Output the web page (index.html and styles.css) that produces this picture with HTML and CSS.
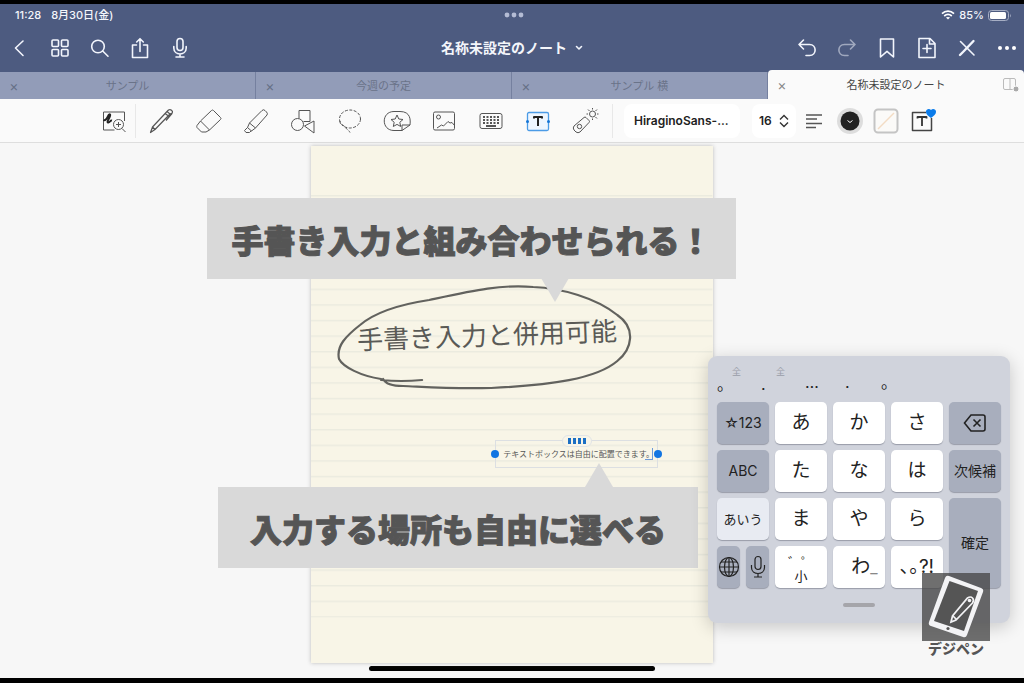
FILE: index.html
```html
<!DOCTYPE html>
<html lang="ja">
<head>
<meta charset="utf-8">
<meta name="viewport" content="width=device-width, initial-scale=1">
<title>名称未設定のノート</title>
<link rel="stylesheet" href="styles.css">
</head>
<body>
<header class="header">
  <div class="status">
    <div class="status-left"><span>11:28</span><span>8月30日(金)</span></div>
    <svg class="dots" width="20" height="6" viewBox="0 0 20 6"><circle cx="3" cy="3" r="2.4"/><circle cx="10" cy="3" r="2.4"/><circle cx="17" cy="3" r="2.4"/></svg>
    <div class="status-right">
      <svg width="14" height="10" viewBox="0 0 14 10" fill="none" stroke="#fff" stroke-width="1.7"><path d="M1 3.6C4.5.3 9.500.3 13 3.600M3.200 6C5.500 4 8.500 4 10.800 6"/><path d="M7 9.600 4.900 7.600Q7 6.200 9.100 7.600Z" fill="#fff" stroke="none"/></svg>
      <span>85%</span>
      <svg width="24" height="11" viewBox="0 0 24 11"><rect x=".5" y=".5" width="20" height="10" rx="3" fill="none" stroke="#a6aec4"/><rect x="2" y="2" width="16" height="7" rx="1.500" fill="#fff"/><path d="M22 3.500q1.500 2 0 4z" fill="#a6aec4"/></svg>
    </div>
  </div>
  <nav class="nav">
    <div class="nav-group">
      <button class="nav-btn" aria-label="戻る"><svg width="24" height="24" viewBox="0 0 24 24"><path d="M15 5 7.500 12 15 19.500"/></svg></button>
      <button class="nav-btn" aria-label="一覧"><svg width="24" height="24" viewBox="0 0 24 24"><rect x="4" y="4" width="6.500" height="6.500" rx="1"/><rect x="13.500" y="4" width="6.500" height="6.500" rx="1"/><rect x="4" y="13.500" width="6.500" height="6.500" rx="1"/><rect x="13.500" y="13.500" width="6.500" height="6.500" rx="1"/></svg></button>
      <button class="nav-btn" aria-label="検索"><svg width="24" height="24" viewBox="0 0 24 24"><circle cx="10" cy="10.500" r="6.300"/><path d="m14.700 15 5.300 5.200"/></svg></button>
      <button class="nav-btn" aria-label="共有"><svg width="24" height="24" viewBox="0 0 24 24"><path d="M8.500 9H4.500v12.500h15V9h-4M12 15.500V3M8.700 6 12 2.700 15.300 6"/></svg></button>
      <button class="nav-btn" aria-label="録音"><svg width="24" height="24" viewBox="0 0 24 24"><rect x="9" y="2.500" width="6" height="12" rx="3"/><path d="M5.800 10.500v1.500c0 8 12.400 8 12.400 0v-1.500M12 18v2.800M8 21h8"/></svg></button>
    </div>
    <button class="title">名称未設定のノート<svg width="8" height="8" viewBox="0 0 8 8"><path d="M1.500 2.500 4 5 6.500 2.500"/></svg></button>
    <div class="nav-group nav-end">
      <button class="nav-btn" aria-label="元に戻す"><svg width="24" height="24" viewBox="0 0 24 24"><path d="M8.500 4 4 8.500 8.500 13M4 8.500h10.500c7.500 0 7.500 11 0 11H11"/></svg></button>
      <button class="nav-btn dim" aria-label="やり直す"><svg width="24" height="24" viewBox="0 0 24 24"><path d="M15.500 4 20 8.500 15.500 13M20 8.500H9.500c-7.500 0-7.500 11 0 11H13"/></svg></button>
      <button class="nav-btn" aria-label="しおり"><svg width="24" height="24" viewBox="0 0 24 24"><path d="M5.500 3h13v18L12 15.300 5.500 21z"/></svg></button>
      <button class="nav-btn" aria-label="ページ追加"><svg width="24" height="24" viewBox="0 0 24 24"><path d="M4 2.500h11l5 5v14H4zM14.500 2.500V8H20M12 8.500v8M8 12.500h8"/></svg></button>
      <button class="nav-btn" aria-label="ペン切替"><svg width="24" height="24" viewBox="0 0 24 24"><path d="m5.500 5.500 13.500 13.500"/><path d="m18.500 5-10 10.500M8 16l-3 3" stroke-width="2.400"/></svg></button>
      <button class="nav-btn" aria-label="その他"><svg width="24" height="24" viewBox="0 0 24 24"><g fill="#fff" stroke="none"><circle cx="5" cy="12" r="2"/><circle cx="12" cy="12" r="2"/><circle cx="19" cy="12" r="2"/></g></svg></button>
    </div>
  </nav>
  <div class="tabs">
    <div class="tab"><button class="close" aria-label="閉じる">×</button><span>サンプル</span></div>
    <div class="tab"><button class="close" aria-label="閉じる">×</button><span>今週の予定</span></div>
    <div class="tab"><button class="close" aria-label="閉じる">×</button><span>サンプル 横</span></div>
    <div class="tab active"><button class="close" aria-label="閉じる">×</button><span>名称未設定のノート</span>
      <button class="split" aria-label="分割"><svg width="18" height="16" viewBox="0 0 18 16" fill="none" stroke="#bbb"><rect x="1.500" y="1.500" width="12" height="11" rx="1.500"/><path d="M8 1.500v11"/><circle cx="14" cy="12" r="3" fill="#aaa" stroke="#fafafa"/></svg></button>
    </div>
  </div>
</header>

<div class="toolbar">
  <div class="tools">
    <button class="tool first" aria-label="ズーム"><svg width="28" height="28" viewBox="0 0 28 28"><path d="M24.500 14V5h-21v18h11"/><path d="M3.500 13c3 2 5-7 6.500-5.500S6 15 8 15.500s2-2.500 4-2" stroke-width="2" stroke="#222"/><circle cx="18.500" cy="17.500" r="5"/><path d="m22 21.500 3.500 3.500M18.500 15v5M16 17.500h5"/></svg></button>
    <button class="tool" aria-label="ペン"><svg width="28" height="28" viewBox="0 0 28 28" stroke-width="1.200"><path d="M2.500 25.500 4.500 20 19 4.500 22 7 7 22.500zM4.500 20 7 22.500M17 6.500 20.500 9M19 4.500l1.500-1.500q1.500-1 3 .2t.8 2.800L22 7M24 6.500l-6 7"/></svg></button>
    <button class="tool" aria-label="消しゴム"><svg width="28" height="28" viewBox="0 0 28 28"><path d="M16.500 3.500q1-1 2 0l7 7q1 1 0 2L14.500 23 5.500 14zM5.500 14 2 18.500q-.5 1 0 2l4.500 4.500h4.500l3.500-2"/></svg></button>
    <button class="tool" aria-label="蛍光ペン"><svg width="28" height="28" viewBox="0 0 28 28"><path d="M20 3.500q1.500-1.500 3 0l1.500 1.500q1.500 1.500.5 3L13.500 21 7.500 16zM7.500 16 5.500 20.500 9.500 24 13.500 21M5.500 20.500 2.500 23.500l1.500 2h3.500l2-2"/></svg></button>
    <button class="tool" aria-label="図形"><svg width="28" height="28" viewBox="0 0 28 28"><path d="M10 11.500v-8h11v11h-6.500"/><circle cx="8.500" cy="17.500" r="6"/><path d="m15.500 19 9.500-5v12z"/></svg></button>
    <button class="tool" aria-label="なげなわ"><svg width="28" height="28" viewBox="0 0 28 28" stroke-dasharray="3 1.500"><ellipse cx="14" cy="12" rx="10.500" ry="9"/><path d="M4 14c0 5 3 3 5 6s3 2 5 5.500"/></svg></button>
    <button class="tool" aria-label="ステッカー"><svg width="28" height="28" viewBox="0 0 28 28"><path d="M19 23.500H11C-2 23.500-2 4.500 11 4.500h6c11 0 10.500 9 10 13.500zM19 23.500V18h8"/><path d="m14 8 1.800 4 4.200.5-3.200 2.800.9 4.200L14 17.400l-3.700 2.100.9-4.200L8 12.500l4.200-.5z"/></svg></button>
    <button class="tool" aria-label="画像"><svg width="28" height="28" viewBox="0 0 28 28"><rect x="3.500" y="5" width="21" height="18" rx="1.500"/><circle cx="8.500" cy="10" r="2"/><path d="m7 21 4.500-3 2 1 4.500-4.500 2 1.500 2-.5 2.500 3"/></svg></button>
    <button class="tool" aria-label="キーボード"><svg width="28" height="28" viewBox="0 0 28 28"><rect x="3" y="6.500" width="22" height="15" rx="2"/><path d="M6 10h16M6 13h16M6 16h16" stroke-width="2" stroke-dasharray="2 1.500"/><path d="M9 19h10" stroke-width="2"/></svg></button>
    <button class="tool" aria-label="テキスト"><svg width="28" height="28" viewBox="0 0 28 28"><rect x="3.500" y="5.500" width="21" height="18" rx="1.500" fill="#eef6ff" stroke="#4b9be6" stroke-width="1.300"/><path d="M10 11.500V10h8v1.500M14 10v9" stroke="#222" stroke-width="2"/><g fill="#1676d6" stroke="none"><circle cx="3.500" cy="14.500" r="1.500"/><circle cx="24.500" cy="14.500" r="1.500"/></g></svg></button>
    <button class="tool last" aria-label="レーザー"><svg width="28" height="28" viewBox="0 0 28 28"><path d="M13 10.500q1-1 2 0l3 3q1 1 0 2L9 25q-2 1.500-4 0l-2-2q-1.500-2 0-4z"/><circle cx="8.500" cy="19.500" r="2.200"/><circle cx="21.500" cy="7" r="3"/><path d="M21.500 1v1.500M21.500 11.500V13M15.500 7H17M26 7h1.500M17 2.500l1.500 1.500M26 2.500 24.500 4M24.500 10l1.500 1.500"/></svg></button>
  </div>
  <select class="font-select" aria-label="フォント"><option>HiraginoSans-...</option></select>
  <div class="size-box">
    <select class="size-select" aria-label="文字サイズ"><option>16</option></select>
    <svg width="10" height="14" viewBox="0 0 10 14" fill="none" stroke="#333" stroke-width="1.400"><path d="M1 5.500 5 1.500l4 4M1 8.500l4 4 4-4"/></svg>
  </div>
  <div class="format">
    <button class="fmt" aria-label="揃え"><svg width="28" height="28" viewBox="0 0 28 28" stroke-width="1.500"><path d="M6 8h16M6 12h11M6 16.500h16M6 20.500h10"/></svg></button>
    <button class="fmt" aria-label="文字色"><svg width="28" height="28" viewBox="0 0 28 28"><circle cx="14" cy="14" r="13" fill="#ddd" stroke="none"/><circle cx="14" cy="14" r="9.500" fill="#222" stroke="none"/><path d="m11.500 13.500 2.500 2 2.500-2" stroke="#fff"/></svg></button>
    <button class="fmt" aria-label="背景色"><svg width="28" height="28" viewBox="0 0 28 28"><rect x="2.500" y="2.500" width="23" height="23" rx="3.500" fill="#fbfaf8" stroke="#c4c4c4" stroke-width="2"/><path d="M6 22 22 6" stroke="#f3dcc4" stroke-width="1.500"/></svg></button>
    <button class="fmt" aria-label="既定スタイル"><svg width="28" height="28" viewBox="0 0 28 28"><path d="M23.500 11v12.500h-19v-18H18" stroke="#444" stroke-width="1.500"/><path d="M9.500 11.500V10h9v1.500M14 10v9" stroke="#333" stroke-width="1.800"/><path d="M23 11c-4-3-5-4-5-6.500s3.500-3.500 5-1.500c1.500-2 5-1 5 1.500S27 8 23 11z" fill="#0a7bea" stroke="none"/></svg></button>
  </div>
</div>

<main class="canvas">
  <article class="page">
    <svg class="ink" viewBox="0 0 401 517" preserveAspectRatio="none">
      <defs><pattern id="rule" width="401" height="15.600" patternUnits="userSpaceOnUse" y="49"><path d="M0 .7h401" stroke="#ebebdf" stroke-width="1.400"/></pattern></defs>
      <rect y="49" width="401" height="422.500" fill="url(#rule)"/>
      <path d="M70 233C50 230 32 221 28 213C25 200 35 190 49 179C62 168 85 159 118 154C160 145 190 138 222 141C250 142 285 152 306 169C325 182 321 203 306 215C285 233 240 239 180 242C140 243 115 241 92 240C80 240 74 237 72 233M70 234Q90 236 111 234" fill="none" stroke="#62625e" stroke-width="2.200" stroke-linecap="round"/>
    </svg>
    <p class="handwriting">手書き入力と併用可能</p>
    <div class="textbox">
      <span class="grip"><i></i><i></i><i></i><i></i></span>
      <input class="textbox-input" aria-label="テキストボックス" value="テキストボックスは自由に配置できます。">
      <span class="handle left"></span><span class="handle right"></span><span class="caret"></span>
    </div>
  </article>

  <div class="callout top">手書き入力と組み合わせられる！</div>
  <div class="callout bottom">入力する場所も自由に選べる</div>

  <section class="keyboard" aria-label="キーボード">
    <div class="candidates">
      <button class="cand wide"><small>全</small><span>。</span></button>
      <button class="cand wide"><small>全</small><span>.</span></button>
      <button class="cand"><span>…</span></button>
      <button class="cand"><span>.</span></button>
      <button class="cand"><span>。</span></button>
    </div>
    <div class="keys">
      <button class="key fn">☆123</button><button class="key">あ</button><button class="key">か</button><button class="key">さ</button>
      <button class="key fn" aria-label="削除"><svg width="24" height="20" viewBox="0 0 24 20"><path d="M8 2h12q2 0 2 2v12q0 2-2 2H8l-6.500-8zM10.500 6.500l7 7M17.500 6.500l-7 7" fill="none" stroke="#222" stroke-width="1.600"/></svg></button>
      <button class="key fn">ABC</button><button class="key">た</button><button class="key">な</button><button class="key">は</button><button class="key fn">次候補</button>
      <button class="key light">あいう</button><button class="key">ま</button><button class="key">や</button><button class="key">ら</button><button class="key fn enter">確定</button>
      <div class="pair">
        <button class="key fn" aria-label="言語"><svg width="22" height="22" viewBox="0 0 22 22" fill="none" stroke="#222" stroke-width="1.200"><circle cx="11" cy="11" r="9.500"/><ellipse cx="11" cy="11" rx="4.500" ry="9.500"/><path d="M11 1.500v19M1.500 11h19M3 6h16M3 16h16"/></svg></button>
        <button class="key fn" aria-label="音声入力"><svg width="18" height="24" viewBox="0 0 18 24" fill="none" stroke="#222" stroke-width="1.200"><rect x="6" y="1.500" width="6" height="13" rx="3"/><path d="M2.500 10v2.500c0 8 13 8 13 0V10M9 18.500V22M5 22h8"/></svg></button>
      </div>
      <button class="key marks"><span>゛゜</span><span>小</span></button><button class="key wa">わ<span>_</span></button><button class="key punct">､｡?!</button>
    </div>
    <div class="kb-grip"></div>
  </section>

  <div class="brand">
    <div class="brand-mark"><svg width="68" height="68" viewBox="0 0 68 68"><path d="M27 3Q24 2 23 5L7 49q-1 3 2 4l32 11q3 1 4-2L61 19q1-3-2-4z" fill="#f3f3f5"/><path d="m27.500 8 28.500 10L42 58 12 48z" fill="#555"/><circle cx="26" cy="55.500" r="1.600" fill="#555"/><path d="M29 49 30.500 43 45.500 25q3-2 5 0t0 5L34 47zM31 43l3 3" fill="none" stroke="#f3f3f5" stroke-width="1.700"/><circle cx="47.500" cy="27.500" r="1.800" fill="#f3f3f5"/></svg></div>
    <span>デジペン</span>
  </div>
  <div class="home-bar"></div>
</main>
</body>
</html>
```

FILE: styles.css
```css
* { box-sizing: border-box; }

body {
  margin: 0;
  min-height: 100vh;
  display: flex;
  flex-direction: column;
  overflow: hidden;
  border-top: 4px solid #000;
  border-bottom: 5px solid #000;
  background: #f7f7f7;
  color: #222;
  font-family: Inter, "Noto Sans CJK JP", sans-serif;
}

button, select, input { font-family: inherit; color: inherit; }
button { border: 0; padding: 0; background: none; }
svg { display: block; flex: none; }

.header { background: #4d5b80; color: #f4f6fb; }

.status {
  display: grid;
  grid-template-columns: 1fr auto 1fr;
  align-items: center;
  height: 22px;
  padding: 0 12px 0 15px;
  font-size: 11px;
  line-height: 14px;
  font-weight: 500;
}
.status-left { display: flex; gap: 10px; }
.status-right { display: flex; gap: 4px; align-items: center; justify-content: flex-end; }
.dots { fill: #b4bcd4; }

.nav {
  display: grid;
  grid-template-columns: 1fr auto 1fr;
  align-items: center;
  height: 44px;
}
.nav-group { display: flex; }
.nav-end { justify-content: flex-end; margin-right: -3px; }
.nav-btn { width: 40px; height: 40px; display: grid; place-items: center; }
.nav-btn svg, .title svg { fill: none; stroke: #f2f5fc; stroke-width: 1.6; stroke-linejoin: round; stroke-linecap: round; }
.dim { opacity: .5; }
.title { display: flex; align-items: center; gap: 8px; font-size: 14px; line-height: 20px; font-weight: 700; }

.tabs { display: grid; grid-template-columns: repeat(4, 1fr); align-items: end; }
.tab {
  position: relative;
  display: grid;
  place-items: center;
  height: 27px;
  background: #929cb8;
  color: #6a7389;
  border-right: 1px solid #75809f;
  font-size: 11px;
  line-height: 16px;
}
.tab.active { height: 29px; background: #fafafa; color: #444; border: 0; border-radius: 4px 4px 0 0; }
.close { position: absolute; left: 8px; font-size: 14px; line-height: 16px; width: 12px; color: #667086; }
.active .close { color: #888; }
.split { position: absolute; right: 4px; }

.toolbar {
  display: flex;
  align-items: center;
  height: 44px;
  padding-left: 92px;
  background: #fafafa;
  border-bottom: 1px solid #dedede;
}
.tools { display: flex; align-items: center; border-right: 1px solid #e8e8e8; padding-right: 4px; }
.tool { width: 47px; height: 34px; display: grid; place-items: center; }
.tool svg, .fmt svg { fill: none; stroke: #555; overflow: visible; stroke-linejoin: round; }
.first { border-right: 1px solid #e8e8e8; width: 44px; margin-right: 2px; }
.font-select, .size-select { appearance: none; border: 0; background: #fff; font-size: 12px; font-weight: 600; }
.font-select { width: 116px; height: 34px; margin-left: 11px; padding: 0 10px; border-radius: 8px; }
.size-box { display: flex; align-items: center; gap: 3px; height: 34px; margin-left: 12px; padding: 0 7px; background: #fff; border-radius: 8px; }
.size-select { width: 17px; padding: 0; }
.format { display: flex; }
.fmt { width: 36px; height: 34px; display: grid; place-items: center; }

.canvas { position: relative; flex: 1; display: flex; flex-direction: column; padding-top: 3px; }
.page {
  position: relative;
  flex: 1;
  width: 39.2%;
  margin: 0 auto;
  background: #f8f5e7;
  box-shadow: 0 0 4px #bbb;
}
.ink { position: absolute; width: 100%; height: 100%; }
.handwriting {
  position: absolute;
  left: 46px;
  top: 172px;
  margin: 0;
  color: #5a5a56;
  font-size: 26px;
  line-height: 36px;
  font-weight: 400;
  white-space: nowrap;
  transform: rotate(-2deg);
}
.textbox { position: absolute; left: 184px; top: 294px; width: 163px; height: 28px; border: 1px solid #dcdfe2; }
.textbox-input { display: block; width: 100%; height: 24px; padding: 0 0 0 7px; border: 0; background: none; font-size: 8px; color: #555; }
.handle { position: absolute; top: 9px; width: 8px; height: 8px; border-radius: 50%; background: #1275e2; }
.left { left: -5px; }
.right { right: -5px; }
.caret { position: absolute; right: 4px; top: 7px; width: 8px; height: 12px; border: solid #6d9bd8; border-width: 0 1px 1px 0; }
.grip { position: absolute; left: 66px; top: -6px; width: 30px; height: 12px; display: flex; gap: 2px; align-items: center; justify-content: center; background: #f8f5e9; border: 1px solid #e1e4e6; border-radius: 6px; }
.grip i { width: 3px; height: 6px; background: #1b6fc4; }

.callout {
  position: absolute;
  display: grid;
  place-items: center;
  height: 81px;
  background: #d9d9d9;
  color: #555;
  font-family: "Noto Sans CJK JP", sans-serif;
  font-size: 32px;
  line-height: 40px;
  font-weight: 900;
  -webkit-text-stroke: 1px #555;
  white-space: nowrap;
}
.callout::after { content: ""; position: absolute; width: 28px; height: 24px; background: #d9d9d9; }
.top { left: 207px; top: 55px; width: 529px; }
.top::after { top: 80px; left: 334px; clip-path: polygon(0 0, 100% 0, 50% 100%); }
.bottom { left: 218px; top: 344px; width: 480px; }
.bottom::after { top: -24px; left: 367px; clip-path: polygon(0 100%, 100% 100%, 50% 0); }

.keyboard {
  position: absolute;
  right: 14px;
  bottom: 55px;
  width: 302px;
  padding: 10px 9px 16px;
  border-radius: 9px;
  background: #d0d3dc;
  box-shadow: 0 4px 18px rgba(0, 0, 0, .2);
}
.candidates { display: flex; height: 36px; }
.cand { display: flex; flex-direction: column; justify-content: end; height: 26px; width: 36px; text-align: left; font-size: 16px; line-height: 12px; }
.cand span { height: 16px; }
.cand.wide { width: 42px; }
.cand:nth-child(2) { padding-left: 2px; }
.cand:nth-child(3) { width: 44px; padding-left: 4px; }
.cand small { padding-left: 15px; font-size: 9px; line-height: 12px; color: #999da8; }
.keys { display: grid; grid-template-columns: repeat(5, 1fr); grid-auto-rows: 42px; gap: 6px; }
.key {
  display: grid;
  place-items: center;
  border-radius: 5px;
  background: #fff;
  box-shadow: 0 1px 1px #989ca8;
  font-size: 19px;
  line-height: 24px;
  white-space: nowrap;
}
.fn { background: #a8aebd; font-size: 14px; }
.light { background: #e8ebf2; font-size: 13px; }
.enter { grid-row: span 2; }
.pair { display: grid; grid-template-columns: 1fr 1fr; gap: 6px; }
.marks { align-content: center; padding-top: 4px; font-size: 13px; line-height: 14px; }
.wa { display: flex; justify-content: center; align-items: center; padding-left: 11px; }
.wa span { font-size: 16px; color: #888; }
.kb-grip { width: 32px; height: 4px; margin: 15px auto 0; border-radius: 2px; background: #a5a5aa; }

.brand { position: absolute; right: 34px; bottom: 22px; display: flex; flex-direction: column; align-items: center; font-size: 14px; line-height: 15px; font-weight: 900; color: #555; }
.brand-mark { background: rgba(70, 70, 70, .78); }
.home-bar { width: 28%; height: 5px; margin: 3px auto 7px; border-radius: 3px; background: #000; }
```
